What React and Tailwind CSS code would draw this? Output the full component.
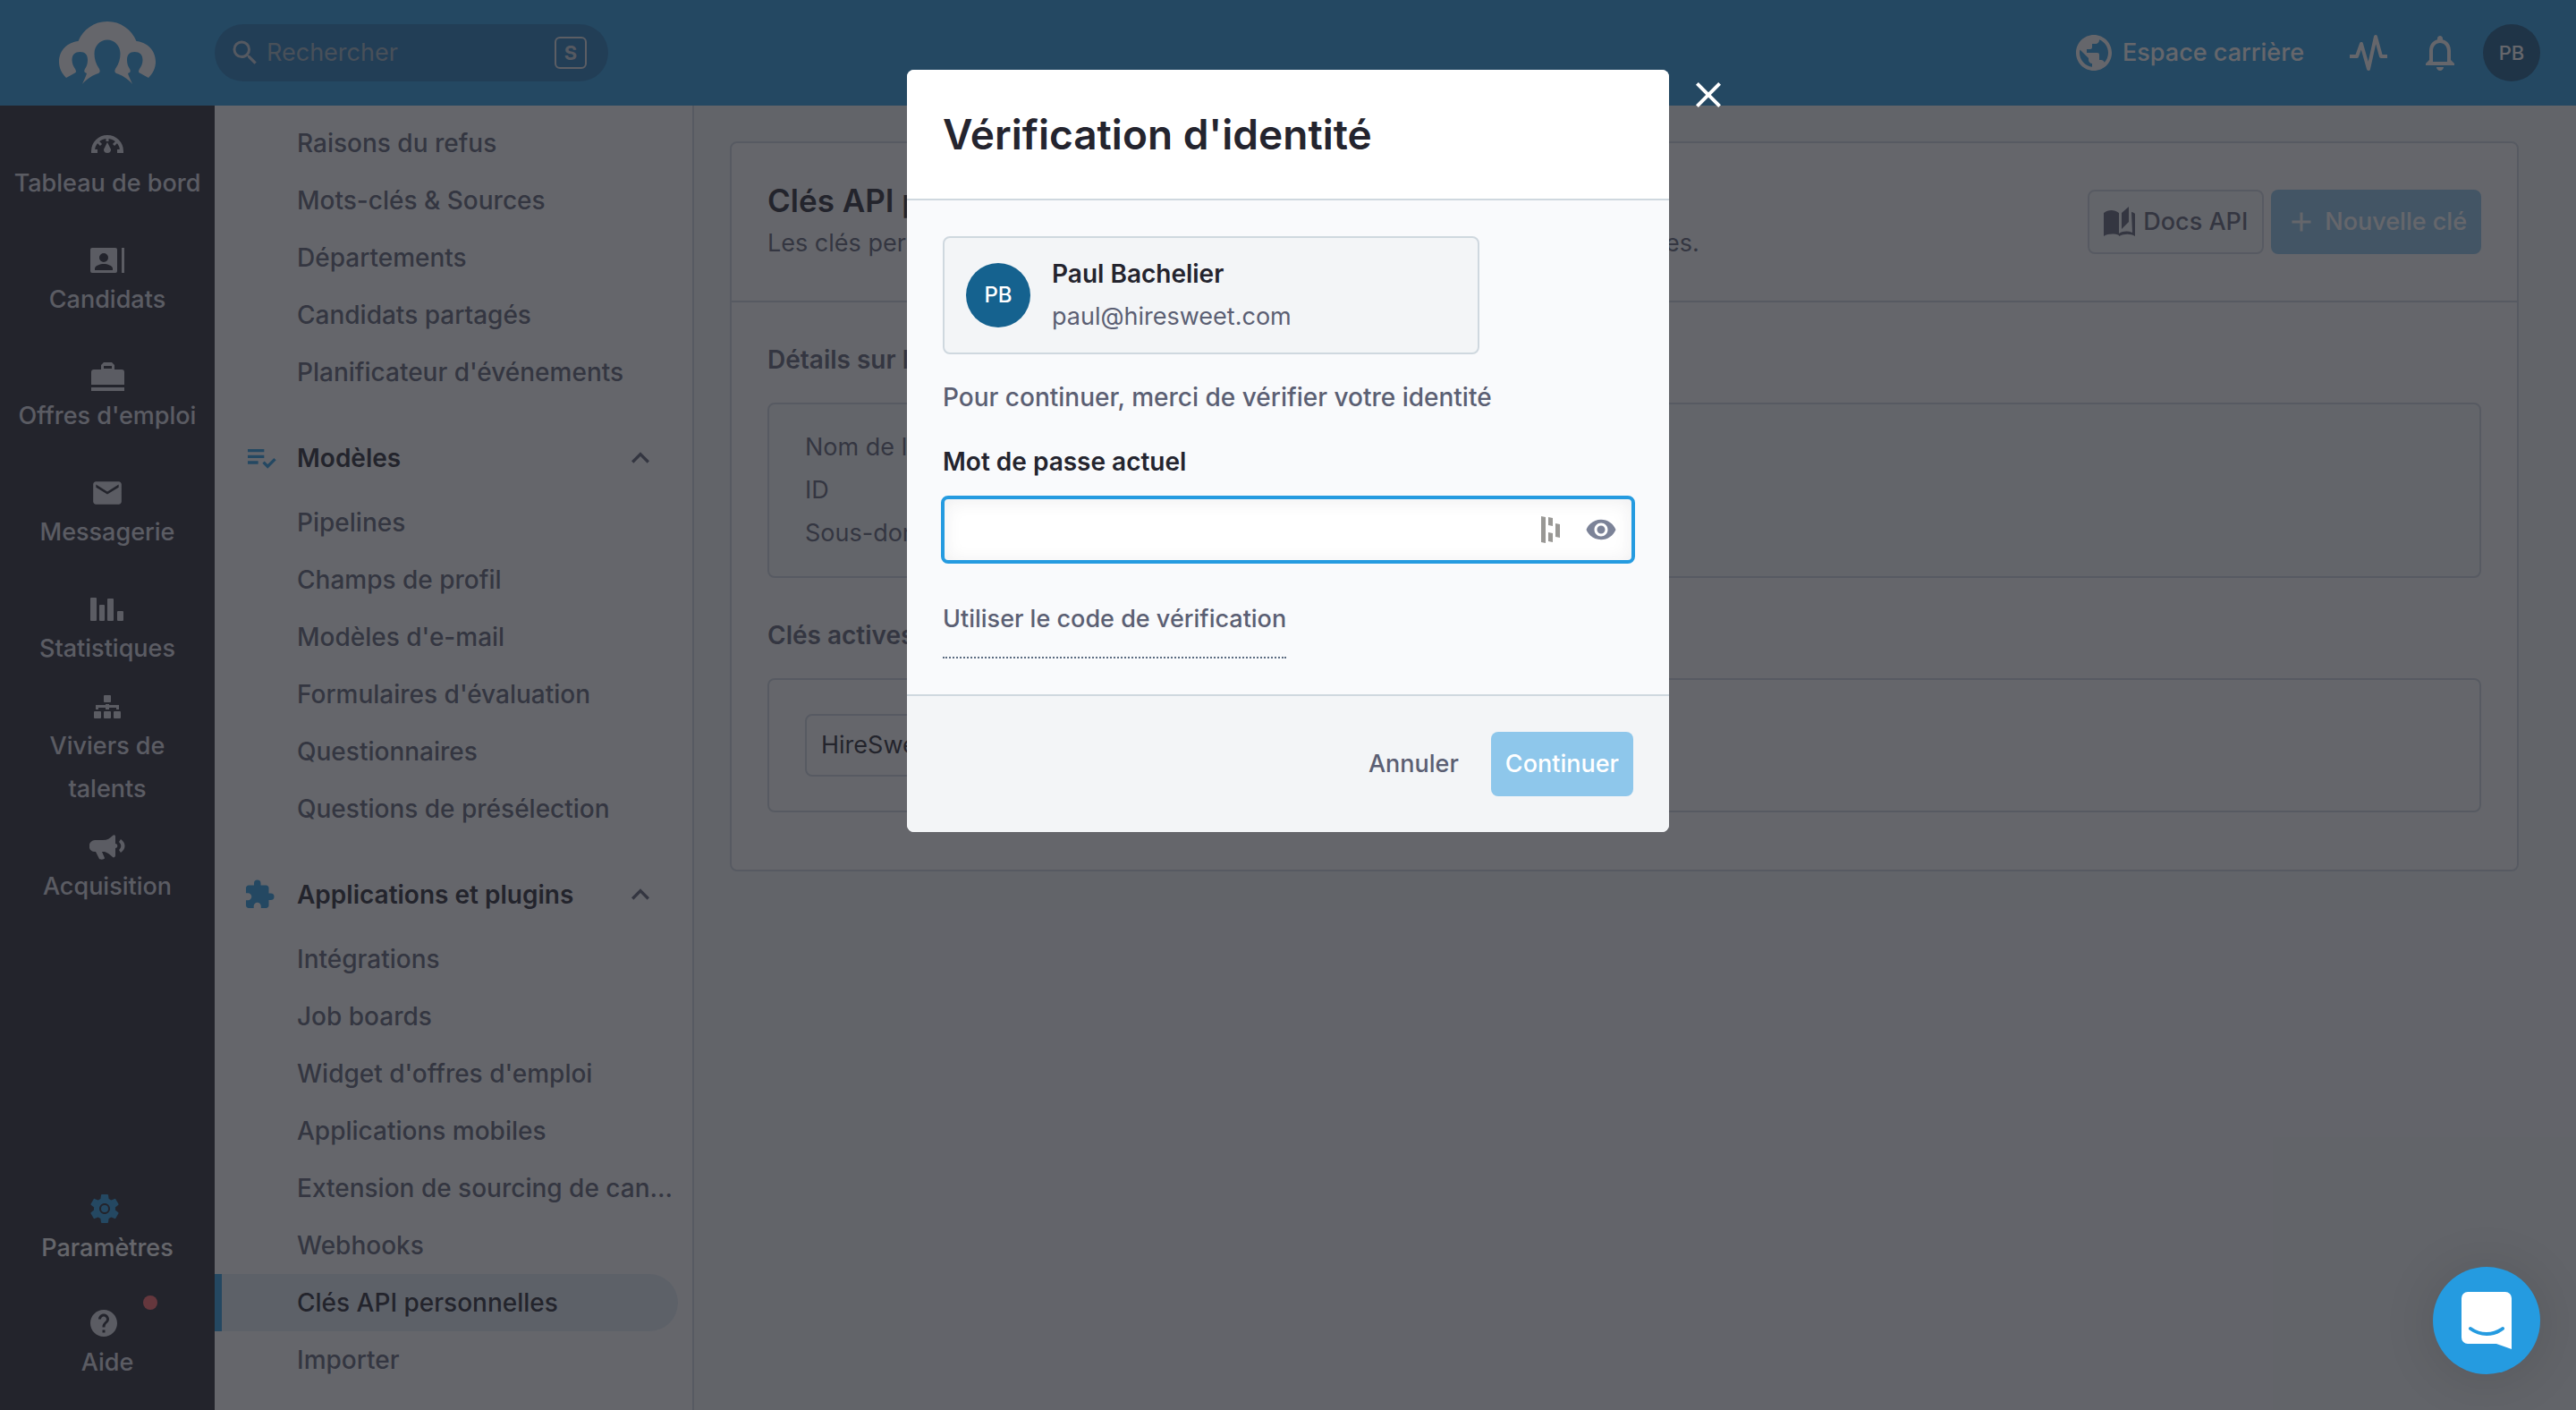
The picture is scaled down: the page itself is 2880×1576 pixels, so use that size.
import React from "react";
import {
  MdSearch, MdEmail, MdSettings, MdHelp, MdPublic, MdPlaylistAddCheck,
  MdExtension, MdKeyboardArrowUp, MdAdd, MdClose, MdVisibility, MdNotificationsNone,
} from "react-icons/md";

const Logo = () => (
  <svg viewBox="0 0 108 70" className="h-[70px] w-[108px]" fill="#ffffff" aria-hidden="true">
    <path d="M8 63C3 58 0 52 0 45 0 32 10 23 21.500 22 27 9 39 0 54 0s27 9 32.500 22C98 23 108 32 108 45c0 7-3 13-8 18l-9-5c-3-1-2-3-1-5 2-3 3.500-6 3.500-10 0-6-3.500-9-9-9S76 37 76 43c0 4 1 7 3 10 1 2 1 3 0 4l-2 1 1 3 4 9c-6-7-12-10-18-12-2-1-2-3-1-5 4-6 5.500-11 5.500-17 0-9-6.500-15.500-14.500-15.500S39.500 27 39.500 36c0 6 1.500 11 5.500 17 1 2 1 4-1 5-6 2-12 5-18 12l4-9 1-3-2-1c-1-1-1-2 0-4 2-3 3-6 3-10 0-6-3-9-8.500-9s-9 3-9 9c0 4 1.500 7 3.500 10 1 2 2 4-1 5z" />
  </svg>
);

const Gauge = () => (
  <svg viewBox="0 0 38 22" className="h-[22px] w-[38px]" aria-hidden="true">
    <path d="M8 19H3A16 16 0 0 1 35 19h-5" fill="none" stroke="currentColor" strokeWidth="4" />
    <path d="M19 3v5M8 8l4 4M30 8l-4 4" stroke="currentColor" strokeWidth="3" />
    <path d="M19 9l4 8a4 4 0 1 1-8 0z" fill="currentColor" />
  </svg>
);

const Contacts = () => (
  <svg viewBox="0 0 38 28" className="h-[28px] w-[38px]" aria-hidden="true">
    <path fill="currentColor" fillRule="evenodd" d="M2 0h26a2 2 0 0 1 2 2v24a2 2 0 0 1-2 2H2a2 2 0 0 1-2-2V2a2 2 0 0 1 2-2zM15 6a5 5 0 1 0 0 10 5 5 0 0 0 0-10zM5 25h20v-2c0-3-6-5-10-5S5 20 5 23zM35 0h3v28h-3z" />
  </svg>
);

const Briefcase = () => (
  <svg viewBox="0 0 37 32" className="h-[32px] w-[37px]" aria-hidden="true">
    <path fill="currentColor" fillRule="evenodd" d="M14 0h9l3 3v5h8a3 3 0 0 1 3 3v14H0V11a3 3 0 0 1 3-3h8V3zM14 4v3h9V4zM0 28h37v4H0z" />
  </svg>
);

const Bars = () => (
  <svg viewBox="0 0 38 26" className="h-[26px] w-[38px]" fill="currentColor" aria-hidden="true">
    <rect x="0" y="0" width="7" height="26" rx="1" />
    <rect x="10" y="8" width="6" height="18" rx="1" />
    <rect x="19" y="1" width="7" height="25" rx="1" />
    <rect x="30" y="15" width="7" height="11" rx="1" />
  </svg>
);

const Sitemap = () => (
  <svg viewBox="0 0 30 26" className="h-[26px] w-[30px]" fill="currentColor" aria-hidden="true">
    <rect x="11" y="0" width="8" height="8" rx="1" />
    <rect x="0" y="18" width="8" height="8" rx="1" />
    <rect x="11" y="18" width="8" height="8" rx="1" />
    <rect x="22" y="18" width="8" height="8" rx="1" />
    <path d="M13 10h4v1h11v5h-3v-2h-8v2h-4v-2H5v2H2v-5h11z" />
  </svg>
);

const Megaphone = () => (
  <svg viewBox="0 0 40 28" className="h-[28px] w-[40px]" fill="currentColor" aria-hidden="true">
    <path d="M6 6h9c5 0 8-2 11-5 1-1 3-1 3 1v8c3 0 3 5 0 5v8c0 2-2 3-3 2-3-3-6-5-9-6h-3l3 7c0 2-5 2-6 1L7 19C-2 20-3 7 6 6z" />
    <path d="M35 5c6 4 6 11 0 15l-2-3c3-3 3-6 0-9z" />
  </svg>
);

const Gear = () => (
  <svg viewBox="0 0 40 40" className="mr-1.5 size-10" aria-hidden="true">
    <MdSettings size={40} color="#259be0" />
    <circle cx="20" cy="20" r="4" fill="#259be0" />
  </svg>
);

const Book = () => (
  <svg viewBox="0 0 36 34" className="h-[34px] w-[36px]" fill="currentColor" aria-hidden="true">
    <path d="M0 7C5 3 12 3 17 7v25c-5-2-12-2-17 1z" />
    <path d="M20 7l8-7v17l-8 8z" />
    <path d="M31 6c2 0 3 1 4 2v25c-5-3-12-3-18 0v-3c5-3 10-3 15-1z" />
  </svg>
);

const Pulse = () => (
  <svg viewBox="0 0 44 44" className="h-[44px] w-[44px]" fill="none" stroke="#ffffff" strokeWidth="4" strokeLinejoin="round" aria-hidden="true">
    <path d="M1 26h8l5-14 8 28 8-36 6 22h7" />
  </svg>
);

const Strength = () => (
  <svg viewBox="0 0 21 30" className="h-[30px] w-[21px]" fill="#999895" aria-hidden="true">
    <path d="M0 0l5 1v29l-5-1zM8 1l5 1v9l-5-1zM8 18l5 1v10l-5-1zM16 8l5 1v15l-5-1z" />
  </svg>
);

const railTop = [
  ["Tableau de bord", <Gauge />],
  ["Candidats", <Contacts />],
  ["Offres d'emploi", <Briefcase />],
  ["Messagerie", <MdEmail />],
  ["Statistiques", <Bars />],
  ["Viviers de talents", <Sitemap />],
  ["Acquisition", <Megaphone />],
];

const RailItem = ({ label, children }) => (
  <a href="#" className="flex min-h-[130px] flex-col items-center justify-center text-center">
    <span className="flex h-10 items-center text-[38px]">{children}</span>
    <span className="px-3 leading-[48px]">{label}</span>
  </a>
);

const MenuItem = ({ children, active }) => (
  <li>
    <a
      href="#"
      className={
        active
          ? "mr-4 flex h-16 items-center rounded-r-full border-l-8 border-[#259be0] bg-[#e4edf6] pl-[84px] text-[#24242e]"
          : "flex h-16 items-center pl-[92px]"
      }
    >
      {children}
    </a>
  </li>
);

const Group = ({ title, icon, children }) => (
  <section className="mt-6">
    <button className="flex h-20 w-full items-center pr-[38px] pl-8 font-semibold text-[#24242e]">
      <span className="w-[60px] text-[#259be0]">{icon}</span>
      {title}
      <MdKeyboardArrowUp className="ml-auto size-10 text-[#5b5f73]" />
    </button>
    <ul>{children}</ul>
  </section>
);

export default function App() {
  return (
    <div className="relative flex h-screen flex-col overflow-hidden bg-[#f6f7f9] font-['Inter',sans-serif] text-[27px] leading-[48px] text-[#5b5f73]">
      <header className="flex h-[118px] shrink-0 items-center bg-[#259be0] pr-10 text-white">
        <a href="#" aria-label="Accueil" className="flex w-60 justify-center"><Logo /></a>
        <label className="flex h-16 w-[440px] items-center rounded-full bg-[#2179ba] pr-6 pl-4 text-[#c8d3dc]">
          <MdSearch className="mr-1.5 size-9 shrink-0" />
          <input aria-label="Rechercher" placeholder="Rechercher" className="w-full min-w-0 bg-transparent text-[27px] outline-none placeholder:text-[#9fb4c4]" />
          <kbd className="flex size-9 shrink-0 items-center justify-center rounded-md border-2 border-[#dfe3e8] font-['Inter',sans-serif] text-[22px] font-bold">S</kbd>
        </label>
        <a href="#" className="ml-auto flex items-center gap-2 font-medium">
          <MdPublic className="size-12" />Espace carrière
        </a>
        <button aria-label="Activité" className="ml-[50px]"><Pulse /></button>
        <button aria-label="Notifications" className="ml-[34px]"><MdNotificationsNone className="size-12" /></button>
        <button className="ml-6 size-16 rounded-full bg-[#145888] text-[22px] font-medium">PB</button>
      </header>

      <div className="flex min-h-0 flex-1">
        <nav className="flex w-60 shrink-0 flex-col bg-[#24242e] pt-0.5 pb-2 font-medium text-[#dcdde4]">
          {railTop.map(([label, icon]) => <RailItem key={label} label={label}>{icon}</RailItem>)}
          <div className="mt-auto">
            <RailItem label={<span className="text-white">Paramètres</span>}><Gear /></RailItem>
            <div className="relative -mt-0.5">
              <RailItem label="Aide"><MdHelp className="mr-2 size-9" /></RailItem>
              <span className="absolute top-2.5 left-40 size-4 rounded-full bg-[#ff6167]" />
            </div>
          </div>
        </nav>

        <aside className="w-[536px] shrink-0 overflow-hidden border-r-2 border-[#cfd8df] bg-white pt-[10px] text-[28px] font-medium">
          <ul>
            <MenuItem>Raisons du refus</MenuItem>
            <MenuItem>Mots-clés &amp; Sources</MenuItem>
            <MenuItem>Départements</MenuItem>
            <MenuItem>Candidats partagés</MenuItem>
            <MenuItem>Planificateur d'événements</MenuItem>
          </ul>
          <Group title="Modèles" icon={<MdPlaylistAddCheck className="size-10" />}>
            <MenuItem>Pipelines</MenuItem>
            <MenuItem>Champs de profil</MenuItem>
            <MenuItem>Modèles d'e-mail</MenuItem>
            <MenuItem>Formulaires d'évaluation</MenuItem>
            <MenuItem>Questionnaires</MenuItem>
            <MenuItem>Questions de présélection</MenuItem>
          </Group>
          <Group title="Applications et plugins" icon={<MdExtension className="size-9" />}>
            <MenuItem>Intégrations</MenuItem>
            <MenuItem>Job boards</MenuItem>
            <MenuItem>Widget d'offres d'emploi</MenuItem>
            <MenuItem>Applications mobiles</MenuItem>
            <MenuItem>Extension de sourcing de can…</MenuItem>
            <MenuItem>Webhooks</MenuItem>
            <MenuItem active>Clés API personnelles</MenuItem>
            <MenuItem>Importer</MenuItem>
          </Group>
        </aside>

        <main className="min-w-0 flex-1 pt-10 pr-16 pl-10">
          <div className="rounded-lg border-2 border-[#cfd8df] bg-white">
            <div className="flex items-center border-b-2 border-[#cfd8df] px-10 py-10">
              <div className="min-w-0">
                <h1 className="text-[35px] font-semibold text-[#24242e]">Clés API personnelles</h1>
                <p>Les clés personnelles vous permettent d'accéder à l'API pour traiter vos données.</p>
              </div>
              <button className="ml-auto flex h-[72px] shrink-0 items-center gap-2 rounded-lg border-2 border-[#cfd8df] bg-[#f9fafc] px-4 font-medium">
                <Book />Docs API
              </button>
              <button className="ml-2 flex h-[72px] shrink-0 items-center gap-2 rounded-lg bg-[#8ec7eb] px-4 font-medium text-white">
                <MdAdd className="size-9" />Nouvelle clé
              </button>
            </div>
            <div className="px-10 pt-10 pb-16">
              <h2 className="text-[28px] font-semibold">Détails sur l'ATS</h2>
              <div className="mt-6 rounded-lg border-2 border-[#cfd8df] bg-[#f9fafc] px-10 py-6">
                <p>Nom de l'ATS</p><p>ID</p><p>Sous-domaine</p>
              </div>
              <h2 className="mt-10 text-[28px] font-semibold">Clés actives</h2>
              <div className="mt-6 rounded-lg border-2 border-[#cfd8df] px-10 py-[38px]">
                <div className="flex h-[70px] w-96 items-center rounded-lg border-2 border-[#cfd8df] px-4 text-[#24242e]">HireSweet</div>
              </div>
            </div>
          </div>
        </main>
      </div>

      <div className="absolute inset-0 flex items-start justify-center bg-[#24252c]/70 pt-[78px]">
        <div role="dialog" aria-labelledby="dialog-title" className="relative w-[852px] rounded-lg bg-[#f9fafc]">
          <div className="rounded-t-lg border-b-2 border-[#cfd8df] bg-white px-10 py-10">
            <h2 id="dialog-title" className="text-[46px] leading-[64px] font-semibold text-[#24242e]">Vérification d'identité</h2>
          </div>
          <button aria-label="Fermer" className="absolute top-1 -right-[68px] text-white"><MdClose className="size-12" /></button>
          <div className="px-10 py-10">
            <div className="flex h-[132px] w-[600px] items-center gap-6 rounded-lg border-2 border-[#cfd8df] bg-[#f3f5f7] px-6">
              <span className="flex size-[72px] items-center justify-center rounded-full bg-[#15628f] text-[24px] font-medium text-white">PB</span>
              <div>
                <p className="text-[28px] font-semibold text-[#24242e]">Paul Bachelier</p>
                <p>paul@hiresweet.com</p>
              </div>
            </div>
            <p className="mt-6 text-[28px] font-medium">Pour continuer, merci de vérifier votre identité</p>
            <label htmlFor="password" className="mt-6 block text-[28px] font-semibold text-[#24242e]">Mot de passe actuel</label>
            <div className="-mx-[2px] mt-[14px] flex h-[76px] items-center rounded-lg border-4 border-[#259be0] bg-white pr-4 shadow-[inset_0_2px_20px_rgba(36,36,46,0.08)]">
              <input id="password" type="password" className="h-full min-w-0 flex-1 bg-transparent px-4 outline-none" />
              <Strength />
              <button aria-label="Afficher le mot de passe" className="ml-7"><MdVisibility className="size-9 text-[#7c8398]" /></button>
            </div>
            <a href="#" className="mt-[38px] inline-block border-b-2 border-dotted border-[#5b6b80] pb-[18px] font-medium">Utiliser le code de vérification</a>
          </div>
          <div className="flex items-center justify-end rounded-b-lg border-t-2 border-[#cfd8df] bg-[#f3f5f7] px-10 py-10 font-medium">
            <button className="h-[72px] px-4">Annuler</button>
            <button className="ml-5 h-[72px] rounded-lg bg-[#8ec7eb] px-4 text-white">Continuer</button>
          </div>
        </div>
      </div>

      <button aria-label="Ouvrir la messagerie" className="absolute right-10 bottom-10 flex size-[120px] items-center justify-center rounded-full bg-[#259be0] shadow-[0_4px_60px_rgba(0,0,0,0.12)]">
        <svg viewBox="0 0 56 64" className="h-[64px] w-[56px]" aria-hidden="true">
          <path d="M7 0h42a7 7 0 0 1 7 7v57l-17-6H7a7 7 0 0 1-7-7V7a7 7 0 0 1 7-7z" fill="#ffffff" />
          <path d="M10 41c11 8 25 8 36 0" fill="none" stroke="#259be0" strokeWidth="4" strokeLinecap="round" />
        </svg>
      </button>
    </div>
  );
}
